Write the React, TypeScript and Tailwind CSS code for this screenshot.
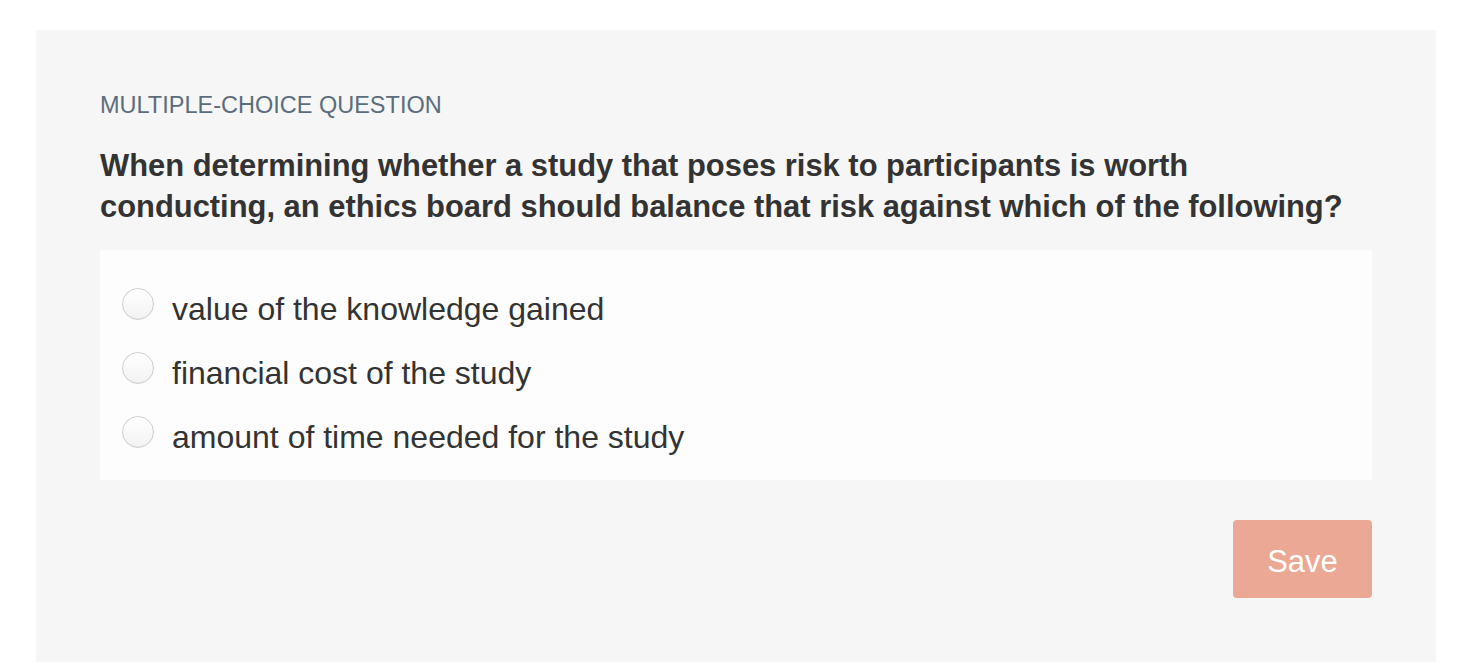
import * as React from "react";

const options = [
  "value of the knowledge gained",
  "financial cost of the study",
  "amount of time needed for the study",
];

function Radio() {
  return (
    <span className="block h-[32px] w-[32px] shrink-0 rounded-full border border-[#cfcfcf] bg-gradient-to-b from-white to-[#f3f3f3] shadow-[inset_0_-1px_1px_rgba(0,0,0,0.04)]" />
  );
}

export default function App() {
  const [selected, setSelected] = React.useState<number | null>(null);

  return (
    <div className="min-h-[666px] bg-white pl-[36px] pt-[30px] font-['Liberation_Sans',Arial,sans-serif]">
      <div className="w-[1400px] bg-[#f6f6f6] px-[64px] pb-[64px] pt-[60px]">
        <div className="text-[23.5px] leading-[30px] text-[#5b6d7c]">MULTIPLE-CHOICE QUESTION</div>
        <h2 className="mt-[25px] max-w-[1250px] text-[30.9px] font-bold leading-[41px] text-[#333333]">
          When determining whether a study that poses risk to participants is worth conducting, an ethics
          board should balance that risk against which of the following?
        </h2>

        <div className="mt-[23px] bg-[#fdfdfd] pb-[16px] pl-[22px] pt-[22px]">
          {options.map((opt, i) => (
            <label
              key={opt}
              className="flex h-16 cursor-pointer items-center gap-[18px]"
              onClick={() => setSelected(i)}
            >
              {selected === i ? (
                <span className="flex h-[32px] w-[32px] shrink-0 items-center justify-center rounded-full border border-[#cfcfcf] bg-white">
                  <span className="h-[14px] w-[14px] rounded-full bg-[#e9a592]" />
                </span>
              ) : (
                <Radio />
              )}
              <span className="mt-[10px] text-[32px] leading-[40px] text-[#333333]">{opt}</span>
            </label>
          ))}
        </div>

        <div className="mt-[40px] flex justify-end">
          <button
            type="button"
            className="h-[78px] w-[139px] rounded-[4px] bg-[#eba895] pt-[6px] text-[31px] text-white"
          >
            Save
          </button>
        </div>
      </div>
    </div>
  );
}
